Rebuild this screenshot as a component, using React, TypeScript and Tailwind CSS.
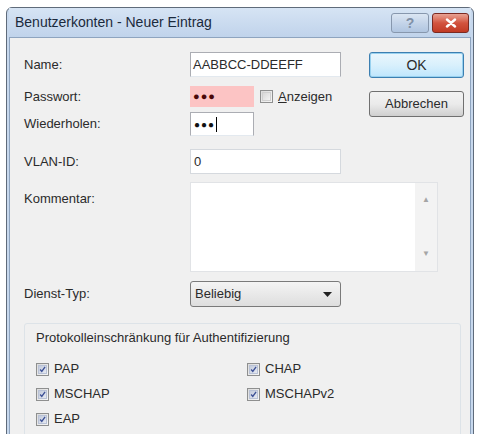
import React from "react";

const font = { fontFamily: '"Liberation Sans", Arial, sans-serif' };

function CheckBox({ checked }: { checked: boolean }) {
  return (
    <span className="flex h-[13px] w-[13px] shrink-0 items-center justify-center border border-[#8e8f8f] bg-gradient-to-br from-[#dcdcdc] to-[#f6f6f6]">
      <span className={`flex h-[9px] w-[9px] items-center justify-center border ${checked ? "border-[#b9c2d6] bg-gradient-to-br from-[#c3cbdc] to-[#e6e9f1]" : "border-[#d0d0d0] bg-gradient-to-br from-[#d8d8d8] to-[#f3f3f3]"}`}>
        {checked ? (
          <svg width="9" height="9" viewBox="0 0 9 9">
            <path d="M1.5 4.5 L3.6 7 L7.8 1.2" fill="none" stroke="#3b4f95" strokeWidth="1.7" />
          </svg>
        ) : null}
      </span>
    </span>
  );
}

function Check({ label }: { label: string }) {
  return (
    <div className="flex h-[25px] items-center gap-[5px]">
      <CheckBox checked />
      <span className="text-[13px] text-[#2b2b2b]">{label}</span>
    </div>
  );
}

function Row({ label, children, top = 0, className = "" }: { label: string; children: React.ReactNode; top?: number; className?: string }) {
  return (
    <div className={`flex ${top ? "items-start" : "items-center"} ${className}`}>
      <div className={`w-[166px] shrink-0 text-[13px] text-[#2b2b2b] ${top ? "pt-[7px]" : ""}`}>{label}</div>
      {children}
    </div>
  );
}

export default function App() {
  return (
    <div className="h-[434px] w-[479px] overflow-hidden bg-white pl-[6px] pt-[7px]" style={font}>
      <div className="h-[440px] w-[468px] rounded-t-[6px] border border-[#5f6b7a] bg-[#c7d8ed] px-[2px]">
        {/* title bar */}
        <div className="flex h-[29px] items-center justify-between bg-gradient-to-b from-[#d6e4f4] to-[#c0d3eb] pl-[6px] pr-[2px]">
          <span className="text-[14px] text-[#1b2a3c]">Benutzerkonten - Neuer Eintrag</span>
          <div className="flex items-center gap-[3px] self-start pt-[5px]">
            <div className="flex h-[20px] w-[38px] items-center justify-center rounded-[3px] border border-[#8797ad] bg-gradient-to-b from-[#dbe6f3] via-[#c4d4e9] to-[#b0c5e0] text-[14px] font-bold text-[#8090a6]">
              ?
            </div>
            <div className="flex h-[20px] w-[37px] items-center justify-center rounded-[3px] border border-[#7b2a22] bg-gradient-to-b from-[#e8a293] via-[#d2533f] to-[#c13a24]">
              <svg width="12" height="10" viewBox="0 0 12 10">
                <path d="M2 1.5 L10 8.5 M10 1.5 L2 8.5" stroke="#fff" strokeWidth="2.4" strokeLinecap="round" />
              </svg>
            </div>
          </div>
        </div>

        {/* client area */}
        <div className="h-[420px] border border-[#8ea4bf] bg-[#f0f0f0] pt-[14px]">
          <div className="flex">
            <div className="w-[359px] pl-[14px]">
              <Row label="Name:">
                <div className="flex h-[25px] w-[151px] items-center border border-[#abadb3] border-b-[#e3e9ef] bg-white pl-[2px] text-[13px] text-[#2b2b2b]">
                  AABBCC-DDEEFF
                </div>
              </Row>
              <Row label="Passwort:" className="mt-[9px]">
                <div className="flex h-[21px] w-[64px] items-center bg-[#fcc4c4] pl-[3px] text-[11px] tracking-[1px] text-[#4a0808]">
                  ●●●
                </div>
                <div className="ml-[6px] flex items-center gap-[5px]">
                  <CheckBox checked={false} />
                  <span className="text-[13px] text-[#2b2b2b]">
                    <span className="underline">A</span>nzeigen
                  </span>
                </div>
              </Row>
              <Row label="Wiederholen:" className="mt-[5px]">
                <div className="flex h-[24px] w-[64px] items-center border border-[#abadb3] border-b-[#e3e9ef] bg-white pl-[3px] text-[10px] tracking-[1px] text-[#111]">
                  ●●●<span className="ml-[1px] inline-block h-[15px] w-[1px] bg-black" />
                </div>
              </Row>
              <Row label="VLAN-ID:" className="mt-[13px]">
                <div className="flex h-[25px] w-[151px] items-center border border-[#d5d9de] bg-white pl-[3px] text-[13px] text-[#2b2b2b]">
                  0
                </div>
              </Row>
              <Row label="Kommentar:" top={1} className="mt-[8px]">
                <div className="flex h-[90px] w-[248px] shrink-0 border border-[#e1e3e6] bg-white">
                  <div className="flex-1" />
                  <div className="flex w-[22px] flex-col items-center justify-between bg-[#f3f3f3] py-[11px] text-[8px] text-[#a5a5a5]">
                    <span>▲</span>
                    <span>▼</span>
                  </div>
                </div>
              </Row>
              <Row label="Dienst-Typ:" className="mt-[9px]">
                <div className="flex h-[26px] w-[151px] items-center justify-between rounded-[3px] border border-[#7a7a7a] bg-gradient-to-b from-[#f4f4f4] to-[#dedede] pl-[4px] pr-[8px] text-[13px] text-[#2b2b2b]">
                  <span>Beliebig</span>
                  <svg width="9" height="5" viewBox="0 0 9 5">
                    <path d="M0 0 H9 L4.5 5 Z" fill="#222" />
                  </svg>
                </div>
              </Row>
            </div>

            <div className="flex flex-col gap-[13px]">
              <div className="flex h-[26px] w-[95px] items-center justify-center rounded-[3px] border border-[#3c7fb1] bg-gradient-to-b from-[#eaf6fd] via-[#d9f0fc] to-[#bee6fd] text-[14px] text-[#2b2b2b] shadow-[inset_0_0_0_1px_#98d1ef]">
                OK
              </div>
              <div className="flex h-[26px] w-[95px] items-center justify-center rounded-[3px] border border-[#707070] bg-gradient-to-b from-[#f2f2f2] via-[#ebebeb] to-[#cfcfcf] text-[13px] text-[#2b2b2b]">
                Abbrechen
              </div>
            </div>
          </div>

          {/* group box */}
          <div className="ml-[14px] mt-[16px] h-[120px] w-[437px] rounded-[3px] border border-[#dde3e8] pl-[11px] pt-[4px]">
            <div className="text-[13px] text-[#2b2b2b]">Protokolleinschränkung für Authentifizierung</div>
            <div className="mt-[9px] grid grid-cols-[211px_1fr]">
              <Check label="PAP" />
              <Check label="CHAP" />
              <Check label="MSCHAP" />
              <Check label="MSCHAPv2" />
              <Check label="EAP" />
            </div>
          </div>
        </div>
      </div>
    </div>
  );
}
